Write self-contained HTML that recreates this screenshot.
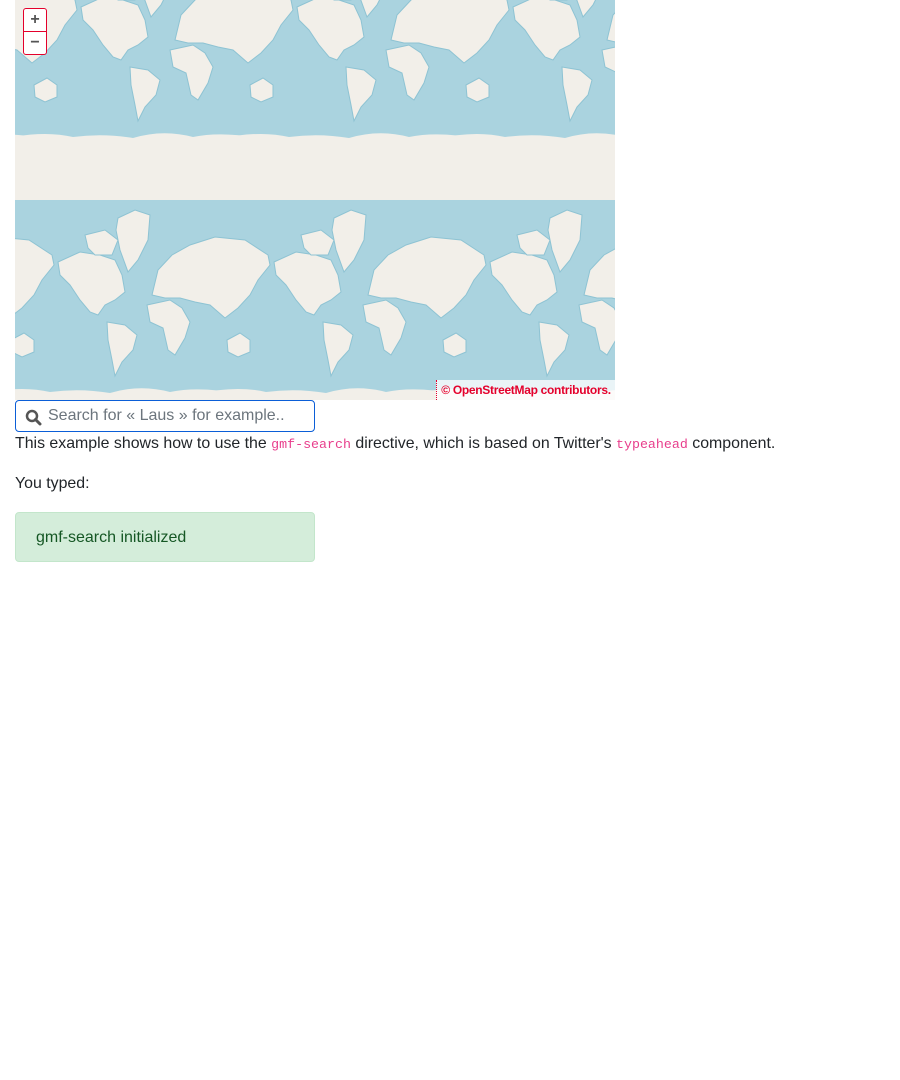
<!DOCTYPE html>
<html><head><meta charset="utf-8">
<style>
html,body{margin:0;padding:0;background:#fff;}
body{font-family:"Liberation Sans",sans-serif;font-size:16px;color:#212529;width:900px;height:1080px;position:relative;overflow:hidden;}
#map{position:absolute;left:15px;top:0;width:600px;height:400px;overflow:hidden;background:#aad3df;}
.zoom{position:absolute;left:8px;top:8px;width:22px;background:#fff;border:1px solid #e4002b;border-radius:3px;}
.zoom div{height:22px;line-height:21px;text-align:center;font-size:16px;font-weight:bold;color:#555;}
.zoom div+div{border-top:1px solid #e4002b;}
.attr{position:absolute;right:0;bottom:0;width:178px;height:20px;background:rgba(255,255,255,0.75);color:#e4002b;font-size:12px;line-height:20px;text-align:center;font-weight:bold;border-left:1px dotted #e4002b;white-space:nowrap;overflow:hidden;letter-spacing:-0.3px;}
.search{position:absolute;left:15px;top:400px;width:298px;height:30px;border:1px solid #0b5ed7;border-radius:4px;}
.search span{position:absolute;left:32px;top:6px;color:#6c757d;font-size:16px;}
.search svg{position:absolute;left:9px;top:8px;}
p{position:absolute;left:15px;margin:0;font-size:15.9px;}
code{font-family:"Liberation Mono",monospace;font-size:13.3px;color:#e83e8c;}
.alert{position:absolute;left:15px;top:512px;width:298px;height:48px;background:#d4edda;border:1px solid #c3e6cb;border-radius:4px;color:#155724;}
.alert span{position:absolute;left:20px;top:16px;}
</style></head><body>
<div id="map">
<svg width="600" height="400" style="position:absolute;left:0;top:0">
<defs>
<clipPath id="top"><rect x="0" y="0" width="600" height="200"/></clipPath>
<g id="t" fill="#f2efe9" stroke="#8ec3d3" stroke-width="1">
<polygon points="58,62 80,52 100,55 115,60 122,75 125,92 115,100 105,105 98,115 90,112 80,100 70,85 60,75"/>
<polygon points="85,35 105,30 118,40 112,55 95,55 88,48"/>
<polygon points="118,18 135,10 150,15 148,40 138,60 128,72 120,50 116,30"/>
<polygon points="107,122 125,125 137,135 133,150 122,162 115,176 112,160 108,140"/>
<polygon points="147,105 170,100 182,108 190,122 185,138 175,155 168,150 163,128 150,122"/>
<polygon points="152,95 158,70 172,55 190,45 215,37 245,40 268,55 270,65 258,80 250,95 238,108 225,118 210,105 195,102 180,98 165,98"/>
<polygon points="227,140 240,133 250,140 250,152 238,157 228,152"/>
<path d="M-20,194 Q20,185 50,192 Q80,188 110,193 Q140,184 170,192 Q200,186 240,194 L240,260 L-20,260 Z" stroke="none"/>
</g>
</defs>
<g transform="translate(-231,200)"><use href="#t"/></g>
<g transform="translate(-15,200)"><use href="#t"/></g>
<g transform="translate(201,200)"><use href="#t"/></g>
<g transform="translate(417,200)"><use href="#t"/></g>
<g clip-path="url(#top)">
<rect x="0" y="0" width="600" height="200" fill="#aad3df"/>
<g transform="translate(-208,-55)"><use href="#t"/></g>
<g transform="translate(8,-55)"><use href="#t"/></g>
<g transform="translate(224,-55)"><use href="#t"/></g>
<g transform="translate(440,-55)"><use href="#t"/></g>
<rect x="0" y="160" width="600" height="40" fill="#f2efe9"/>
</g>
</svg>
<div class="zoom"><div>+</div><div>−</div></div>
<div class="attr">© OpenStreetMap contributors.</div>
</div>
<div class="search">
<svg width="17" height="17" viewBox="0 0 17 17"><circle cx="7" cy="7" r="5" fill="none" stroke="#555" stroke-width="2.5"/><line x1="10.5" y1="10.5" x2="15" y2="15" stroke="#555" stroke-width="3" stroke-linecap="round"/></svg>
<span>Search for « Laus » for example..</span>
</div>
<p style="top:435px">This example shows how to use the <code>gmf-search</code> directive, which is based on Twitter's <code>typeahead</code> component.</p>
<p style="top:475px">You typed:</p>
<div class="alert"><span>gmf-search initialized</span></div>
</body></html>
